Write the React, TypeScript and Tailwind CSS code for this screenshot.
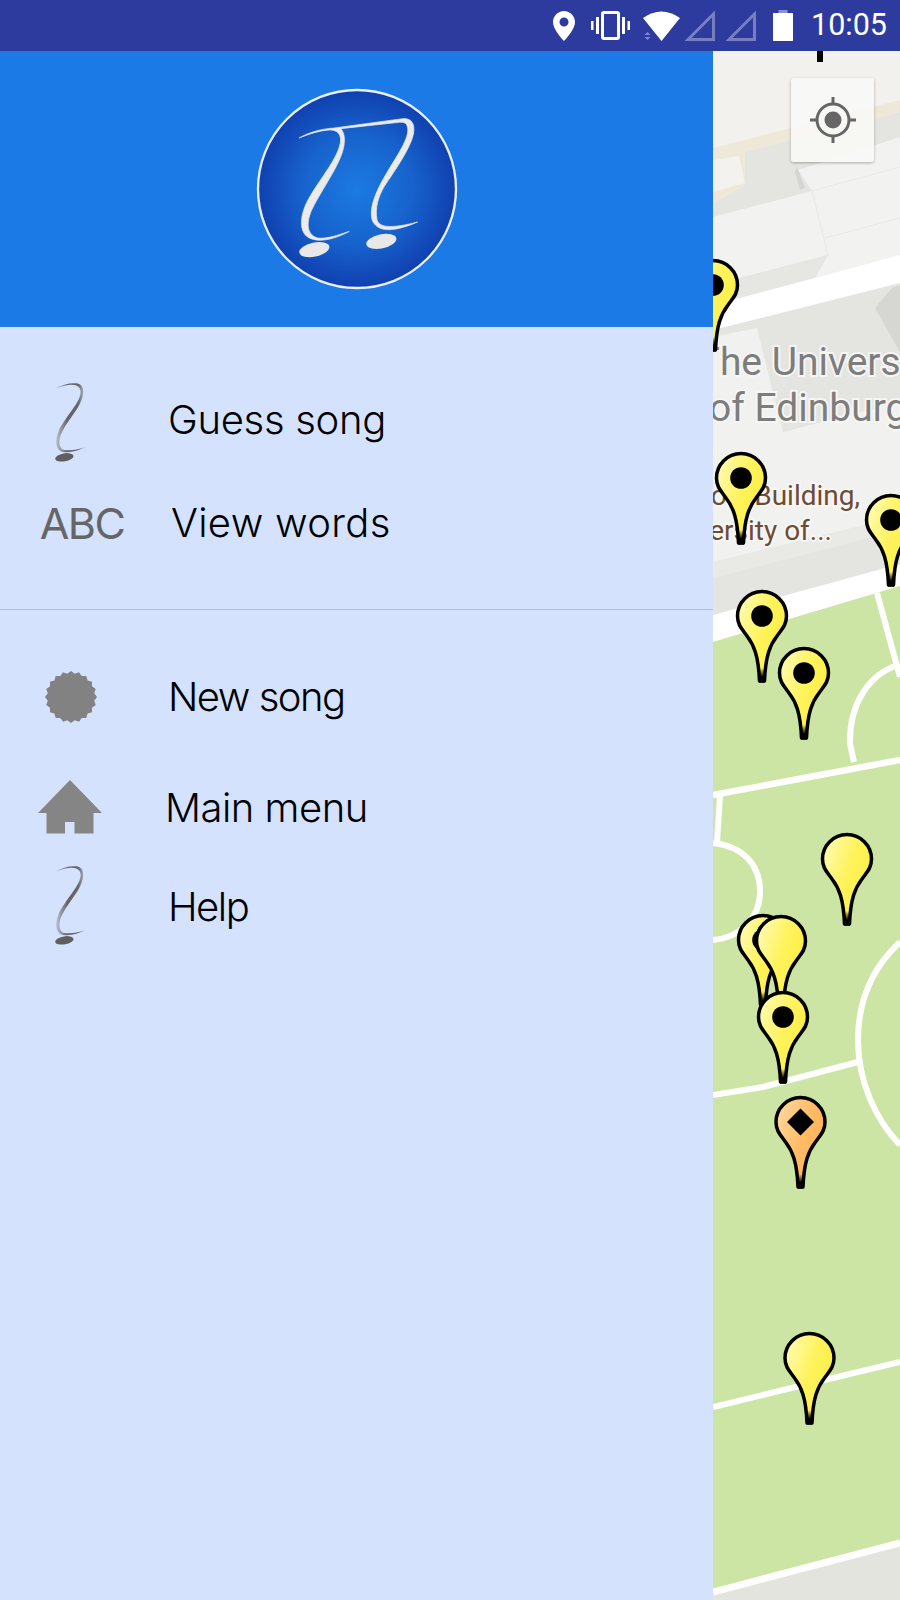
import React from "react";

const TEXT = "[font-family:Inter,sans-serif] font-light text-[40px] leading-none text-black whitespace-nowrap";

function Note({ className = "" }: { className?: string }) {
  return (
    <svg className={"w-[40px] h-[80px] overflow-visible " + className} viewBox="90 60 120 240">
      <defs>
        <linearGradient id="noteFade" x1="0" y1="0" x2="1" y2="0">
          <stop offset="0" stopColor="#666" stopOpacity="0.2" />
          <stop offset="0.4" stopColor="#666" />
          <stop offset="0.75" stopColor="#666" />
          <stop offset="1" stopColor="#666" stopOpacity="0.15" />
        </linearGradient>
      </defs>
      <path
        d="M105 86 C125 74 150 68 170 70 C186 72 192 85 189 105 C183 140 148 175 128 212 C116 234 114 254 126 268 C142 274 170 270 198 261 C172 274 136 282 120 272 C106 262 106 238 115 215 C130 178 178 132 182 100 C184 82 172 73 152 74 C135 75 120 81 105 86 Z"
        fill="url(#noteFade)"
      />
      <ellipse cx="133" cy="292" rx="28" ry="12" transform="rotate(-10 133 292)" fill="#5f5f5f" />
    </svg>
  );
}

function Burst() {
  const pts: string[] = [];
  const n = 40;
  for (let i = 0; i < n; i++) {
    const a = (i / n) * Math.PI * 2;
    const r = i % 2 === 0 ? 26 : 23.5;
    pts.push(`${(26 + r * Math.cos(a)).toFixed(2)},${(26 + r * Math.sin(a)).toFixed(2)}`);
  }
  return (
    <svg className="w-[52px] h-[52px] ml-[2px]" viewBox="0 0 52 52">
      <polygon points={pts.join(" ")} fill="#828282" />
    </svg>
  );
}

function Home() {
  return (
    <svg className="w-[64px] h-[54px] mb-[2px]" viewBox="0 0 64 54">
      <path d="M32 0 L64 33 H55.500 V53.500 H36.500 V42 H27 V53.500 H8.500 V33 H0 Z" fill="#858585" />
    </svg>
  );
}

function Row({ icon, label, className = "", labelClass = "" }: { icon: React.ReactNode; label: string; className?: string; labelClass?: string }) {
  return (
    <div className={"flex items-center h-[80px] " + className}>
      <div className="w-[140px] shrink-0 flex justify-center">{icon}</div>
      <span className={TEXT + " " + labelClass}>{label}</span>
    </div>
  );
}

function Pin({ x, y, kind = "none", orange = false }: { x: number; y: number; kind?: "none" | "dot" | "diamond"; orange?: boolean }) {
  return (
    <g transform={`translate(${x} ${y})`}>
      <path
        d="M0 -24.500 C13.500 -24.500 24.500 -13.500 24.500 0 C24.500 9 20 13 15 20 C8 29 3.500 40 2.500 65 L-2.500 65 C-3.500 40 -8 29 -15 20 C-20 13 -24.500 9 -24.500 0 C-24.500 -13.500 -13.500 -24.500 0 -24.500 Z"
        fill={orange ? "url(#pinOrange)" : "url(#pinYellow)"}
        stroke="#000"
        strokeWidth="3.500"
        strokeLinejoin="round"
      />
      <path d="M-3 52 C-3 57 -3 61 -3 66.500 H3 C3 61 3 57 3 52 Z" fill="url(#pinTip)" />
      {kind === "dot" && <circle cx="0" cy="0" r="10.800" fill="#000" />}
      {kind === "diamond" && <path d="M0 -13.500 L13.500 0 L0 13.500 L-13.500 0 Z" fill="#000" />}
    </g>
  );
}

function MapArt() {
  return (
    <svg className="block w-[187px] h-[1549px]" viewBox="713 51 187 1549">
      <defs>
        <linearGradient id="pinYellow" x1="0" y1="0" x2="1" y2="0.6">
          <stop offset="0" stopColor="#fffcc0" />
          <stop offset="0.55" stopColor="#fff35e" />
          <stop offset="1" stopColor="#fdee3e" />
        </linearGradient>
        <linearGradient id="pinOrange" x1="0" y1="0" x2="1" y2="0.6">
          <stop offset="0" stopColor="#ffdca8" />
          <stop offset="0.6" stopColor="#ffbb66" />
          <stop offset="1" stopColor="#ffb255" />
        </linearGradient>
        <linearGradient id="pinTip" x1="0" y1="0" x2="0" y2="1">
          <stop offset="0" stopColor="#000" stopOpacity="0" />
          <stop offset="0.6" stopColor="#000" />
        </linearGradient>
      </defs>
      <rect x="713" y="51" width="187" height="1549" fill="#f2f1ed" />
      <polygon points="713,160 900,112 900,620 713,620" fill="#e4e4e0" />
      <polygon points="713,148 900,100 900,112 745,152 745,185 713,204" fill="#eee8d8" />
      <polygon points="713,160 739,156 745,183 713,192" fill="#f3f2ee" />
      <polygon points="798,170 900,137 900,256 815,278 828,255 812,191" fill="#f2f2f1" />
      <polygon points="797,167 805,188 800,190 795,172" fill="#d5d5d3" />
      <polygon points="713,217 812,191 828,255 713,285" fill="#f2f2f1" />
      <path d="M812 191 L828 255 M812 191 L900 167 M825 238 L900 218" fill="none" stroke="#e9e9e6" strokeWidth="1" />
      <polygon points="713,285 828,255 815,278 713,305" fill="#e6e6e3" />
      <polygon points="713,305 815,278 900,255 900,283 713,330" fill="#fff" />
      <polygon points="875,308 892,288 900,285 900,352" fill="#d6d6d3" />
      <polygon points="713,337 757,328 783,432 900,402 900,520 713,562" fill="#f1f1f0" />
      <polygon points="713,562 900,516 900,530 713,578" fill="#e9e9e6" />
      <polygon points="713,615 900,564 900,586 713,642" fill="#fff" />
      <polygon points="713,642 900,586 900,1600 713,1600" fill="#cde5a4" />

      <polygon points="713,1592 900,1543 900,1600 713,1600" fill="#e3e4de" />
      <g fill="none" stroke="#fff" strokeWidth="6">
        <path d="M877 593 L900 677" />
        <path d="M900 664 C868 674 849 705 850 744 L854 762" />
        <path d="M713 795 L900 760" strokeWidth="6.500" />
        <path d="M720 795 L717 842" />
        <path d="M713 843 C742 846 760 864 760 891 C760 920 738 938 713 940" />
        <path d="M900 942 C872 968 858 1002 858 1040 C858 1082 876 1120 900 1145" />
        <path d="M713 1095 L763 1087 L858 1062" />
        <path d="M713 1407 L900 1362" />
        <path d="M713 1592 L900 1543" strokeWidth="7" />
      </g>

      <g fontFamily="Roboto, sans-serif" fontSize="39" fill="#7d7d7d" stroke="#f5f5f4" strokeWidth="4" paintOrder="stroke" textAnchor="middle">
        <text x="819" y="375">The University</text>
        <text x="819" y="421">of Edinburgh</text>
      </g>
      <g fontFamily="Roboto, sans-serif" fontSize="28" fill="#6d4c33" stroke="#f7f7f6" strokeWidth="3.500" paintOrder="stroke" textAnchor="end">
        <text x="860" y="505" wordSpacing="5">Hugh Robson Building,</text>
        <text x="832" y="540">University of...</text>
      </g>

      <rect x="817" y="51" width="6" height="11" fill="#000" />
      <Pin x={713} y={285} kind="dot" />
      <Pin x={741} y={478} kind="dot" />
      <Pin x={891} y={520} kind="dot" />
      <Pin x={762} y={616} kind="dot" />
      <Pin x={804} y={673} kind="dot" />
      <Pin x={847} y={859} />
      <Pin x={763} y={940} kind="dot" />
      <Pin x={781} y={941} />
      <Pin x={783} y={1017} kind="dot" />
      <Pin x={800.5} y={1122} kind="diamond" orange />
      <Pin x={809.5} y={1358} />
    </svg>
  );
}

function Logo() {
  return (
    <svg className="w-[204px] h-[204px]" viewBox="72 47 612 612">
      <defs>
        <radialGradient id="logoBg" cx="0.5" cy="0.5" r="0.5">
          <stop offset="0" stopColor="#1c7ae2" />
          <stop offset="0.55" stopColor="#1763cd" />
          <stop offset="1" stopColor="#1040b0" />
        </radialGradient>
      </defs>
      <circle cx="378" cy="353" r="297" fill="url(#logoBg)" stroke="#eaf0fa" strokeWidth="7" />
      <path
        d="M204 200 C230 185 270 172 310 170 L515 142 C540 140 552 155 548 185 C540 230 490 300 460 345 C440 380 432 410 438 445 C445 472 490 470 560 452 C500 478 445 488 425 450 C410 410 440 350 470 300 C500 250 535 200 530 170 C528 155 520 152 505 153 L330 172 C340 185 345 205 335 240 C320 290 270 360 245 410 C225 450 225 490 260 500 C290 503 320 492 355 480 C310 505 250 520 222 490 C200 460 215 410 240 370 C270 320 320 260 328 215 C332 190 320 175 295 176 C265 178 235 188 204 200 Z"
        fill="#ebebeb"
        stroke="#ebebeb"
        strokeWidth="2"
      />
      <ellipse cx="250" cy="535" rx="46" ry="21" transform="rotate(-12 250 535)" fill="#e8e8e8" />
      <ellipse cx="451" cy="510" rx="46" ry="21" transform="rotate(-12 451 510)" fill="#e8e8e8" />
    </svg>
  );
}

function StatusBar() {
  return (
    <div className="h-[51px] bg-[#2e3b9e] flex items-center justify-end pr-[13px] shrink-0">
      <svg className="w-[22px] h-[30px]" viewBox="0 0 22 30">
        <path fillRule="evenodd" fill="#fff" d="M11 0C5 0 0 5 0 11c0 8 11 19 11 19s11-11 11-19C22 5 17 0 11 0z M11 6.500a4.500 4.500 0 1 1 0 9a4.500 4.500 0 1 1 0-9z" />
      </svg>
      <svg className="w-[39px] h-[29px] ml-[16px]" viewBox="0 0 39 29">
        <rect x="11.500" y="1.500" width="16" height="26" rx="1.500" fill="none" stroke="#fff" strokeWidth="3" />
        <path fill="#fff" d="M0 10h2.500v9H0z M5 6h3v17H5z M31 6h3v17h-3z M36.500 10H39v9h-2.500z" />
      </svg>
      <svg className="w-[37px] h-[30px] ml-[13px]" viewBox="0 0 37 30">
        <path fill="#fff" d="M0 7 Q18.500 -6 37 7 L18.500 30 Z" />
        <path fill="#fff" opacity="0.4" d="M4.500 21 l3 3h-6z M1.500 26h6l-3 3z" />
      </svg>
      <svg className="w-[30px] h-[30px] ml-[5px]" viewBox="0 0 30 30">
        <path d="M3 28.500 L28.500 3 V28.500 Z" fill="none" stroke="#fff" strokeOpacity="0.35" strokeWidth="3" />
      </svg>
      <svg className="w-[30px] h-[30px] ml-[11px]" viewBox="0 0 30 30">
        <path d="M3 28.500 L28.500 3 V28.500 Z" fill="none" stroke="#fff" strokeOpacity="0.35" strokeWidth="3" />
      </svg>
      <svg className="w-[20px] h-[31px] ml-[17px]" viewBox="0 0 20 31">
        <path d="M5.500 0h9v3h-9z" fill="#fff" opacity="0.45" />
        <path d="M0 3h20v28H0z" fill="#fff" />
      </svg>
      <span className="ml-[18px] w-[76px] [font-family:Roboto,sans-serif] text-[30.5px] leading-none text-white">10:05</span>
    </div>
  );
}

export default function App() {
  return (
    <div className="w-[900px] h-[1600px] flex flex-col overflow-hidden">
      <StatusBar />
      <div className="flex flex-1 min-h-0">
        <aside className="w-[713px] shrink-0 flex flex-col bg-[#d4e2fd]">
          <div className="h-[276px] bg-[#1b7ae6] flex items-center justify-center">
            <Logo />
          </div>
          <div className="pt-[53px] h-[283px] border-b border-[#b5bdcc]">
            <Row icon={<Note />} label="Guess song" labelClass="ml-[28px] tracking-[-0.3px]" />
            <Row
              className="mt-[23px]"
              icon={<span className="[font-family:Inter,sans-serif] font-normal text-[43px] leading-none tracking-[-1.5px] text-[#666] ml-[24px]">ABC</span>}
              label="View words"
              labelClass="ml-[31px] tracking-[0.3px]"
            />
          </div>
          <div className="pt-[47px]">
            <Row icon={<Burst />} label="New song" labelClass="ml-[28px] tracking-[-1.5px]" />
            <Row className="mt-[31px]" icon={<Home />} label="Main menu" labelClass="ml-[25px] tracking-[-0.5px]" />
            <Row className="mt-[19px]" icon={<Note className="mb-[8px]" />} label="Help" labelClass="ml-[28px] tracking-[-1.5px]" />
          </div>
        </aside>
        <div className="relative flex-1 overflow-hidden">
          <MapArt />
          <div className="absolute top-[27px] right-[26px] w-[83px] h-[84px] rounded-[3px] bg-[#f8f8f6]/90 shadow-[0_1px_3px_rgba(0,0,0,0.3)] flex items-center justify-center">
            <svg className="w-[48px] h-[48px]" viewBox="0 0 48 48">
              <circle cx="24" cy="24" r="16" fill="none" stroke="#666" strokeWidth="3" />
              <circle cx="24" cy="24" r="8.500" fill="#666" />
              <path d="M24 1 V8 M24 40 V47 M1 24 H8 M40 24 H47" stroke="#666" strokeWidth="3" />
            </svg>
          </div>
        </div>
      </div>
    </div>
  );
}
